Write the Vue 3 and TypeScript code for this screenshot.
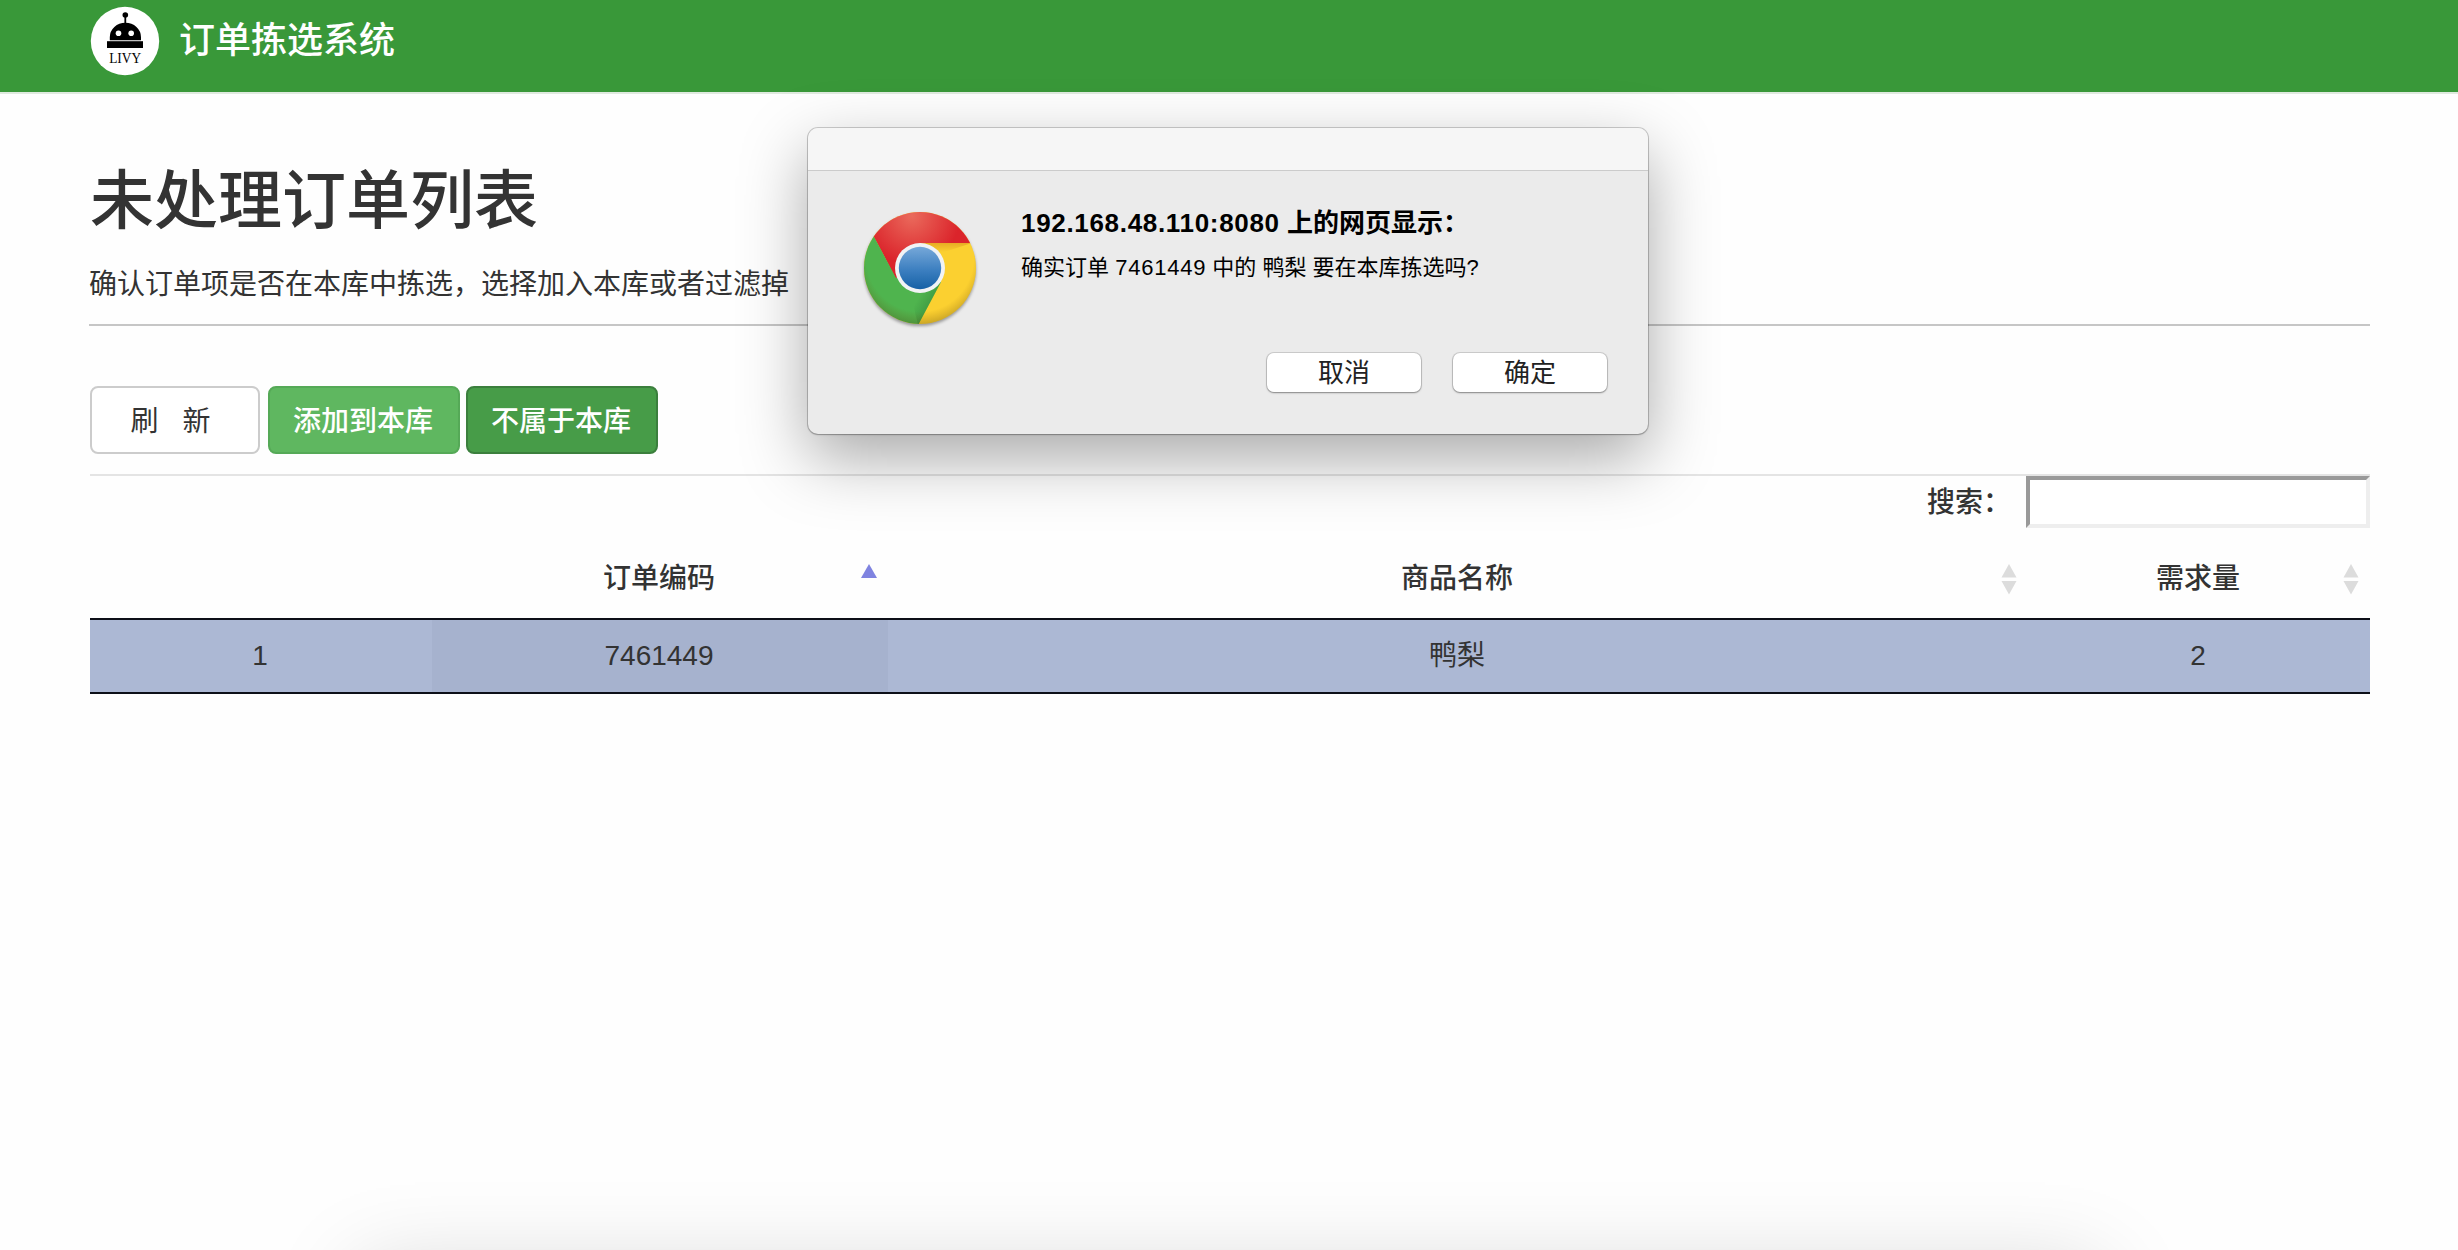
<script setup lang="ts">
interface OrderItem {
  code: string
  name: string
  quantity: number
}

const orders: OrderItem[] = [{ code: '7461449', name: '鸭梨', quantity: 2 }]
</script>

<template>
  <div class="page">
    <header class="navbar">
      <svg class="logo" width="70" height="70" viewBox="0 0 70 70">
        <circle cx="35" cy="35" r="34.2" fill="#fff" />
        <circle cx="35.3" cy="9" r="2.8" />
        <path d="M34.4 10h1.8v7.5h-1.8z" />
        <path d="M19.8 34.2v-3a15.6 14.4 0 0 1 31.2 0v3z" />
        <rect x="17" y="35.2" width="36" height="6.8" />
        <circle cx="28.5" cy="27.2" r="2.8" fill="#fff" />
        <circle cx="41.2" cy="27.2" r="2.8" fill="#fff" />
        <text x="19.2" y="56.8" textLength="32" lengthAdjust="spacingAndGlyphs">LIVY</text>
      </svg>
      <span class="brand">订单拣选系统</span>
    </header>

    <main class="container">
      <h1>未处理订单列表</h1>
      <p class="lead">确认订单项是否在本库中拣选，选择加入本库或者过滤掉</p>

      <div class="toolbar">
        <button class="btn btn-default"><span>刷</span><span>新</span></button>
        <button class="btn btn-add">添加到本库</button>
        <button class="btn btn-remove">不属于本库</button>
      </div>

      <div class="filter">
        <label for="search">搜索：</label>
        <input id="search" type="text" />
      </div>

      <div class="grid head">
        <div></div>
        <div>
          订单编码
          <svg class="sort" width="18" height="32" viewBox="0 0 18 32">
            <path d="M9 0l8 14H1z" fill="#7f83e0" />
          </svg>
        </div>
        <div>
          商品名称
          <svg class="sort" width="18" height="32" viewBox="0 0 18 32">
            <path d="M9 0l7.5 13.5h-15zM1.5 17h15L9 30.500z" fill="#dcdcdc" />
          </svg>
        </div>
        <div>
          需求量
          <svg class="sort" width="18" height="32" viewBox="0 0 18 32">
            <path d="M9 0l7.5 13.5h-15zM1.5 17h15L9 30.500z" fill="#dcdcdc" />
          </svg>
        </div>
      </div>
      <div v-for="(order, i) in orders" :key="order.code" class="grid row">
        <div>{{ i + 1 }}</div>
        <div class="sorted">{{ order.code }}</div>
        <div>{{ order.name }}</div>
        <div>{{ order.quantity }}</div>
      </div>
    </main>

    <section class="dialog">
      <div class="titlebar"></div>
      <div class="body">
        <svg class="chrome" width="120" height="124" viewBox="0 0 120 124">
          <defs>
            <radialGradient id="red" gradientUnits="userSpaceOnUse" cx="52" cy="8" r="48">
              <stop offset="0" stop-color="#ea6a5c" />
              <stop offset="1" stop-color="#db242b" />
            </radialGradient>
            <linearGradient id="blue" x1="0" y1="0" x2="0" y2="1">
              <stop offset="0" stop-color="#76a8d9" />
              <stop offset="0.55" stop-color="#3c7fc0" />
              <stop offset="1" stop-color="#1661a6" />
            </linearGradient>
            <linearGradient id="fold" gradientUnits="userSpaceOnUse" x1="0" y1="35" x2="0" y2="44">
              <stop offset="0" stop-color="#e0a020" stop-opacity=".75" />
              <stop offset="1" stop-color="#e0a020" stop-opacity="0" />
            </linearGradient>
            <linearGradient id="greenfold" gradientUnits="userSpaceOnUse" x1="72" y1="94" x2="60" y2="87">
              <stop offset="0" stop-color="#2c7b35" stop-opacity=".4" />
              <stop offset="1" stop-color="#2c7b35" stop-opacity="0" />
            </linearGradient>
            <radialGradient id="rim" gradientUnits="userSpaceOnUse" cx="60" cy="50" r="67">
              <stop offset=".8" stop-color="#7a4a00" stop-opacity="0" />
              <stop offset="1" stop-color="#4a3a10" stop-opacity=".3" />
            </radialGradient>
            <clipPath id="disc"><circle cx="60" cy="60" r="56" /></clipPath>
          </defs>
          <g clip-path="url(#disc)">
            <rect width="120" height="120" fill="#fbd030" />
            <path d="M0 0H120V35H60L36 71L14 28.5z" fill="url(#red)" />
            <path d="M14 28.5L0 10V120H56.5L81 74L60 60L36 70z" fill="#4fb44e" />
            <path d="M14 28.5L35 66L60 60V35L40 10z" fill="url(#red)" />
            <path d="M60 35H112L78 46z" fill="url(#fold)" />
            <path d="M58.100 117L81 74L50 84z" fill="url(#greenfold)" />
            <rect width="120" height="120" fill="url(#rim)" />
          </g>
          <circle cx="60" cy="60" r="25" fill="#f1f3f5" />
          <circle cx="60" cy="60" r="21.2" fill="url(#blue)" />
        </svg>
        <div class="content">
          <h2><span class="host">192.168.48.110:8080</span> 上的网页显示：</h2>
          <p>确实订单 <span class="num">7461449</span> 中的 鸭梨 要在本库拣选吗?</p>
          <div class="actions">
            <button>取消</button>
            <button>确定</button>
          </div>
        </div>
      </div>
    </section>

    <div class="under-window"></div>
  </div>
</template>

<style>
body {
  margin: 0;
}
</style>

<style scoped>
.page {
  position: relative;
  width: 2458px;
  height: 1250px;
  overflow: hidden;
  background: #fefefe;
  color: #333;
  font-family: 'Liberation Sans', 'Noto Sans CJK SC', sans-serif;
  font-size: 28px;
  line-height: 40px;
}
.navbar {
  box-sizing: border-box;
  display: flex;
  align-items: flex-start;
  height: 94px;
  padding: 6px 0 0 90px;
  background: #399839;
  border-bottom: 2px solid #dfeadf;
}
.logo text {
  font-family: 'Liberation Serif', serif;
  font-size: 14.5px;
}
.brand {
  margin: 10px 0 0 19px;
  color: #fff;
  font-size: 36px;
  line-height: 50px;
  font-weight: 500;
}
.container {
  width: 2280px;
  margin: 0 88px 0 90px;
}
h1 {
  margin: 0;
  padding-top: 72px;
  font-size: 64px;
  line-height: 70px;
  font-weight: 500;
}
.lead {
  margin: 0 0 0 -1px;
  padding: 29px 0 19px 0;
  border-bottom: 2px solid #c6c6c6;
}
.toolbar {
  display: flex;
  padding: 60px 0 20px;
  border-bottom: 2px solid #e4e4e4;
}
.btn {
  box-sizing: border-box;
  width: 192px;
  height: 68px;
  padding: 0 2px 3px 0;
  border: 2px solid;
  border-radius: 8px;
  font: 500 28px/40px 'Noto Sans CJK SC', sans-serif;
  color: #fff;
}
.btn-default {
  display: flex;
  justify-content: center;
  align-items: center;
  gap: 24px;
  width: 170px;
  padding-right: 9px;
  margin-right: 8px;
  background: #fff;
  border-color: #ccc;
  color: #333;
  font-weight: 400;
}
.btn-add {
  margin-right: 6px;
  background: #5fb760;
  border-color: #55a957;
}
.btn-remove {
  background: #479c48;
  border-color: #3b7f3d;
}
.filter {
  display: flex;
  justify-content: flex-end;
  height: 52px;
}
.filter label {
  margin: 7px 15px 0 0;
  font-weight: 500;
}
.filter input {
  box-sizing: border-box;
  width: 344px;
  height: 52px;
  border: 4px solid;
  border-color: #999 #eee #eee #999;
  background: #fff;
}
.grid {
  display: grid;
  grid-template-columns: 15% 20% 50% 15%;
  text-align: center;
}
.head {
  height: 90px;
  font-weight: 500;
}
.head > div {
  position: relative;
  padding: 31px 2px 0 0;
}
.sort {
  position: absolute;
  top: 36px;
  right: 10px;
}
.row {
  border-top: 2px solid #0d0f18;
  border-bottom: 2px solid #0d0f18;
  background: #acb8d4;
}
.row > div {
  padding: 16px 2px 16px 0;
}
.row .sorted {
  background: #a6b2ce;
}
.dialog {
  position: absolute;
  left: 808px;
  top: 128px;
  width: 840px;
  height: 306px;
  border-radius: 10px;
  background: #ebebeb;
  color: #000;
  box-shadow:
    0 0 0 1px rgba(0, 0, 0, 0.18),
    0 1px 2px rgba(0, 0, 0, 0.2),
    0 24px 66px rgba(0, 0, 0, 0.34);
}
.titlebar {
  height: 42px;
  border-radius: 10px 10px 0 0;
  background: #f6f6f6;
  border-bottom: 1px solid #cbcbcb;
}
.body {
  display: flex;
  padding: 37px 41px 0 52px;
}
.chrome {
  filter: drop-shadow(0 2px 1.5px rgba(0, 0, 0, 0.35));
}
.content {
  flex: 1;
  margin-left: 41px;
}
h2 {
  margin: 0;
  font-size: 26px;
  line-height: 30px;
  font-weight: 700;
}
.host {
  letter-spacing: 0.68px;
}
.content p {
  margin: 14px 0 0;
  font-size: 22px;
  line-height: 32px;
}
.num {
  letter-spacing: 0.78px;
}
.actions {
  display: flex;
  justify-content: flex-end;
  gap: 32px;
  margin-top: 69px;
}
.actions button {
  box-sizing: border-box;
  width: 154px;
  height: 39px;
  padding: 0 0 3px;
  border: 0;
  border-radius: 7px;
  background: #fff;
  color: #222;
  font: 400 26px/36px 'Noto Sans CJK SC', sans-serif;
  box-shadow:
    0 0 0 1px rgba(0, 0, 0, 0.13),
    0 1px 2px rgba(0, 0, 0, 0.35);
}
.under-window {
  position: absolute;
  left: 360px;
  top: 1270px;
  width: 1740px;
  height: 300px;
  box-shadow: 0 0 84px rgba(0, 0, 0, 0.17);
}
</style>
